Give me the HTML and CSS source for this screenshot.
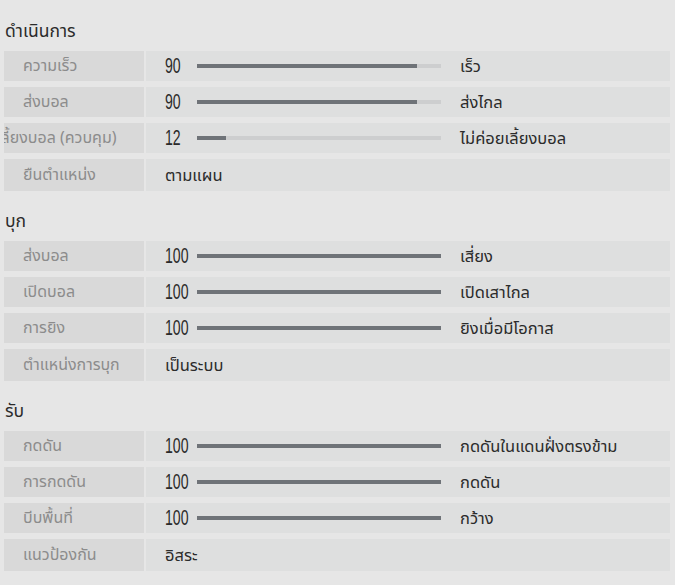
FILE: index.html
```html
<!DOCTYPE html>
<html lang="th">
  <head>
    <meta charset="UTF-8" />
    <meta name="viewport" content="width=device-width, initial-scale=1.0" />
    <title>Tactics</title>
    <link rel="stylesheet" href="styles.css">
  </head>
  <body>
    <div class="panel">
      <section class="group">
        <h2 class="group-title">ดำเนินการ</h2>
        <div class="row">
          <div class="label">ความเร็ว</div>
          <div class="value">
            <span class="num">90</span>
            <div class="bar"><div class="fill" style="width: 90%"></div></div>
            <span class="desc">เร็ว</span>
          </div>
        </div>
        <div class="row">
          <div class="label">ส่งบอล</div>
          <div class="value">
            <span class="num">90</span>
            <div class="bar"><div class="fill" style="width: 90%"></div></div>
            <span class="desc">ส่งไกล</span>
          </div>
        </div>
        <div class="row">
          <div class="label"><span class="scroll">เลี้ยงบอล (ควบคุม)</span></div>
          <div class="value">
            <span class="num">12</span>
            <div class="bar"><div class="fill" style="width: 12%"></div></div>
            <span class="desc">ไม่ค่อยเลี้ยงบอล</span>
          </div>
        </div>
        <div class="row row-text">
          <div class="label">ยืนตำแหน่ง</div>
          <div class="value"><span class="text">ตามแผน</span></div>
        </div>
      </section>

      <section class="group">
        <h2 class="group-title">บุก</h2>
        <div class="row">
          <div class="label">ส่งบอล</div>
          <div class="value">
            <span class="num">100</span>
            <div class="bar"><div class="fill" style="width: 100%"></div></div>
            <span class="desc">เสี่ยง</span>
          </div>
        </div>
        <div class="row">
          <div class="label">เปิดบอล</div>
          <div class="value">
            <span class="num">100</span>
            <div class="bar"><div class="fill" style="width: 100%"></div></div>
            <span class="desc">เปิดเสาไกล</span>
          </div>
        </div>
        <div class="row">
          <div class="label">การยิง</div>
          <div class="value">
            <span class="num">100</span>
            <div class="bar"><div class="fill" style="width: 100%"></div></div>
            <span class="desc">ยิงเมื่อมีโอกาส</span>
          </div>
        </div>
        <div class="row row-text">
          <div class="label">ตำแหน่งการบุก</div>
          <div class="value"><span class="text">เป็นระบบ</span></div>
        </div>
      </section>

      <section class="group">
        <h2 class="group-title">รับ</h2>
        <div class="row">
          <div class="label">กดดัน</div>
          <div class="value">
            <span class="num">100</span>
            <div class="bar"><div class="fill" style="width: 100%"></div></div>
            <span class="desc">กดดันในแดนฝั่งตรงข้าม</span>
          </div>
        </div>
        <div class="row">
          <div class="label">การกดดัน</div>
          <div class="value">
            <span class="num">100</span>
            <div class="bar"><div class="fill" style="width: 100%"></div></div>
            <span class="desc">กดดัน</span>
          </div>
        </div>
        <div class="row">
          <div class="label">บีบพื้นที่</div>
          <div class="value">
            <span class="num">100</span>
            <div class="bar"><div class="fill" style="width: 100%"></div></div>
            <span class="desc">กว้าง</span>
          </div>
        </div>
        <div class="row row-text">
          <div class="label">แนวป้องกัน</div>
          <div class="value"><span class="text">อิสระ</span></div>
        </div>
      </section>
    </div>
  </body>
</html>
```

FILE: styles.css
```css
*,
*::before,
*::after {
  box-sizing: border-box;
}
* {
  margin: 0;
}
body {
  background-color: #e6e6e6;
  font-family: "Noto Sans Thai", "Noto Sans", "DejaVu Sans", sans-serif;
  color: #2e2e2e;
}

.panel {
  display: flex;
  flex-direction: column;
  gap: 18px;
  padding: 19px 5px 0 4px;
}

.group {
  display: flex;
  flex-direction: column;
  gap: 6px;
}

.group-title {
  font-size: 17.5px;
  font-weight: 400;
  line-height: 26px;
  height: 26px;
  padding-left: 1px;
  color: #2b2b2b;
}

.row {
  display: flex;
  gap: 2px;
  height: 30px;
}

.row-text {
  height: 32px;
}

.label {
  width: 140px;
  flex-shrink: 0;
  display: flex;
  align-items: center;
  padding-left: 19px;
  background-color: #d9d9d9;
  color: #8c8c8c;
  font-size: 16px;
  white-space: nowrap;
  overflow: hidden;
}

/* long label, caught mid-scroll */
.scroll {
  margin-left: -27px;
}

.value {
  flex: 1;
  display: flex;
  align-items: center;
  padding-left: 19px;
  background-color: #dedfdf;
}

.num {
  width: 32px;
  flex-shrink: 0;
  display: inline-block;
  font-family: "Liberation Sans", sans-serif;
  font-size: 22px;
  color: #2b2b2b;
  transform: scaleX(0.64);
  transform-origin: left center;
}

.bar {
  width: 244px;
  height: 4px;
  flex-shrink: 0;
  background-color: #cdcecf;
}

.fill {
  height: 100%;
  background-color: #6f7378;
}

.desc {
  margin-left: 19px;
  font-size: 16.5px;
  color: #2b2b2b;
  white-space: nowrap;
}

.text {
  font-size: 16.5px;
  color: #2b2b2b;
}
```
